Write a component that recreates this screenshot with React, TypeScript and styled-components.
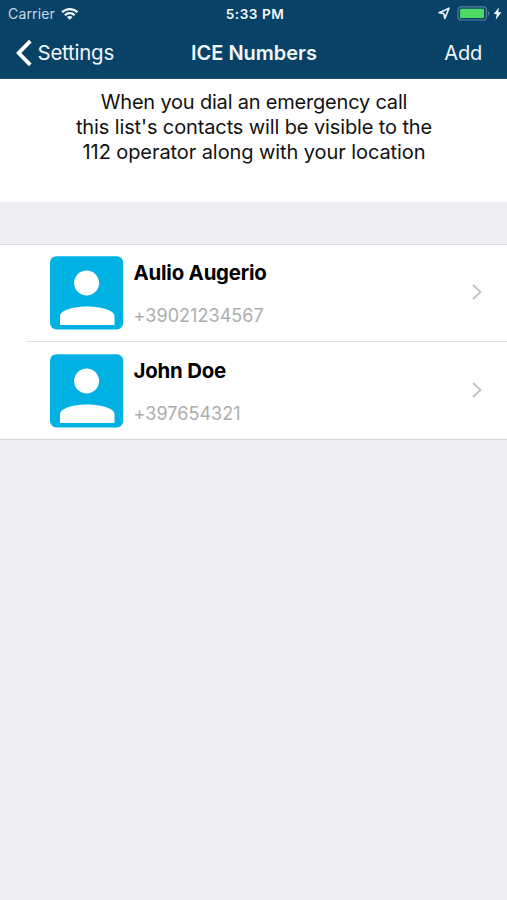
import React from "react";
import styled, { createGlobalStyle } from "styled-components";

const GlobalStyle = createGlobalStyle`
  * { box-sizing: border-box; }
  html, body { margin: 0; background: #eeeef3; }
  body { font-family: Inter, "Liberation Sans", sans-serif; }
  svg { display: block; flex: none; }
`;

const Screen = styled.div`
  width: 507px;
  height: 900px;
  overflow: hidden;
  background: #eeeef3;
  color: #000;
`;

const Header = styled.header`
  height: 79px;
  background: #084367;
  color: #f2f7fb;
  border-bottom: 1px solid #1d5273;
`;

const StatusBar = styled.div`
  display: grid;
  grid-template-columns: 1fr auto 1fr;
  align-items: center;
  height: 27px;
  padding: 0 5px 0 8px;
`;

const StatusGroup = styled.div<{ $end?: boolean }>`
  display: flex;
  align-items: center;
  justify-content: ${(p) => (p.$end ? "flex-end" : "flex-start")};
`;

const Label = styled.span<{ $size: number; $spacing?: number; $weight?: number; $color?: string }>`
  font-size: ${(p) => p.$size}px;
  line-height: 24px;
  font-weight: ${(p) => p.$weight ?? 400};
  letter-spacing: ${(p) => p.$spacing ?? 0}px;
  color: ${(p) => p.$color ?? "inherit"};
  white-space: nowrap;
`;

const WifiIcon = styled.svg`
  margin-left: 6.5px;
`;

const BatteryIcon = styled.svg`
  margin: 0 3px 0 7px;
`;

const NavBar = styled.nav`
  display: grid;
  grid-template-columns: 1fr auto 1fr;
  align-items: center;
  height: 51px;
  padding: 0 25px 0 16px;
`;

const Title = styled.h1`
  display: flex;
  margin: 0;
  padding-left: 10px;
`;

const NavButton = styled.button<{ $end?: boolean }>`
  display: flex;
  align-items: center;
  gap: 4.5px;
  justify-self: ${(p) => (p.$end ? "end" : "start")};
  padding: 0;
  border: 0;
  background: none;
  color: inherit;
  font-family: inherit;
`;

const Notice = styled.section`
  display: flex;
  flex-direction: column;
  align-items: center;
  height: 123px;
  padding: 11px 0 0 1px;
  background: #fff;
`;

const NoticeLine = styled.span<{ $spacing: number }>`
  font-size: 20px;
  line-height: 25px;
  letter-spacing: ${(p) => p.$spacing}px;
  color: #111;
  white-space: nowrap;
`;

const ContactList = styled.main`
  margin-top: 42px;
  background: #fff;
  border-top: 1px solid #d9d9dd;
  border-bottom: 1px solid #d5d5d9;
`;

const ContactRow = styled.div`
  display: flex;
  height: 96px;
  margin-left: 26px;
  padding: 11px 24px 0 23px;

  & + & {
    height: 98px;
    padding-top: 12px;
    border-top: 1px solid #e1e1e4;
  }
`;

const ContactText = styled.div`
  display: flex;
  flex-direction: column;
  gap: 19px;
  flex: 1;
  padding: 5px 0 0 9.5px;
`;

const Disclosure = styled.svg`
  margin-top: 27px;
`;

function Avatar() {
  return (
    <svg width="75" height="75" viewBox="0 0 75 75">
      <rect x="1" y="0.2" width="73.2" height="73.2" rx="6.5" fill="#00b1e4" />
      <circle cx="37.6" cy="27" r="12.5" fill="#fff" />
      <path d="M11 69V60C11 54 25 50.4 38 50.4S65.5 54 65.5 60V69Z" fill="#fff" />
    </svg>
  );
}

const contacts = [
  { name: "Aulio Augerio", phone: "+39021234567" },
  { name: "John Doe", phone: "+397654321" },
];

export default function App() {
  return (
    <Screen>
      <GlobalStyle />
      <Header>
        <StatusBar>
          <StatusGroup>
            <Label $size={14} $spacing={0.15} $color="#c8d8e2">Carrier</Label>
            <WifiIcon width="17.5" height="14" viewBox="0 0 18 14" fill="none" stroke="#f2f7fb" strokeWidth="2.3">
              <path d="M1.1 5.2C5.5.8 12.5.8 16.9 5.2" />
              <path d="M4 8.3C6.8 5.5 11.2 5.5 14 8.3" />
              <path d="M9 13L6.1 10.2C7.7 8.7 10.3 8.7 11.9 10.2Z" fill="#f2f7fb" stroke="none" />
            </WifiIcon>
          </StatusGroup>
          <Label $size={13.6} $spacing={0.5} $weight={600}>5:33 PM</Label>
          <StatusGroup $end>
            <svg width="12" height="13" viewBox="0 0 12 13" fill="none" stroke="#e7f0f5" strokeWidth="1.7" strokeLinejoin="round">
              <path d="M11 1.2L1.2 5.7L5.8 6.6L6.8 11.4Z" />
            </svg>
            <BatteryIcon width="33" height="15" viewBox="0 0 33 15">
              <rect x="1" y=".8" width="28.3" height="13.2" rx="3.3" fill="none" stroke="#58809a" strokeWidth="1.2" />
              <rect x="3" y="2.8" width="24" height="9.2" rx="1" fill="#4cd964" />
              <path d="M30.8 5.2C32.7 5.5 32.7 9.3 30.8 9.6Z" fill="#58809a" />
            </BatteryIcon>
            <svg width="9" height="13" viewBox="0 0 9 13">
              <path d="M6 .3L.7 7.1H3.7L2.7 12.7L8.5 5.3H5.2Z" fill="#f2f7fb" />
            </svg>
          </StatusGroup>
        </StatusBar>
        <NavBar>
          <NavButton>
            <svg width="17" height="28" viewBox="0 0 17 28" fill="none" stroke="#fff" strokeWidth="3.8">
              <path d="M14.3 2.2L2.7 14L14.3 25.8" />
            </svg>
            <Label $size={20.4} $spacing={-0.2}>Settings</Label>
          </NavButton>
          <Title>
            <Label $size={20} $spacing={0} $weight={600}>ICE Numbers</Label>
          </Title>
          <NavButton $end>
            <Label $size={20} $spacing={-0.2}>Add</Label>
          </NavButton>
        </NavBar>
      </Header>
      <Notice>
        <NoticeLine $spacing={-0.2}>When you dial an emergency call</NoticeLine>
        <NoticeLine $spacing={-0.12}>this list's contacts will be visible to the</NoticeLine>
        <NoticeLine $spacing={-0.08}>112 operator along with your location</NoticeLine>
      </Notice>
      <ContactList>
        {contacts.map((c) => (
          <ContactRow key={c.phone}>
            <Avatar />
            <ContactText>
              <Label $size={20.4} $weight={650} $spacing={-0.2}>{c.name}</Label>
              <Label $size={18} $spacing={0.05} $color="#adadad">{c.phone}</Label>
            </ContactText>
            <Disclosure width="12" height="18" viewBox="0 0 12 18" fill="none" stroke="#c4c4c8" strokeWidth="2">
              <path d="M2 2L9.5 9L2 16" />
            </Disclosure>
          </ContactRow>
        ))}
      </ContactList>
    </Screen>
  );
}
